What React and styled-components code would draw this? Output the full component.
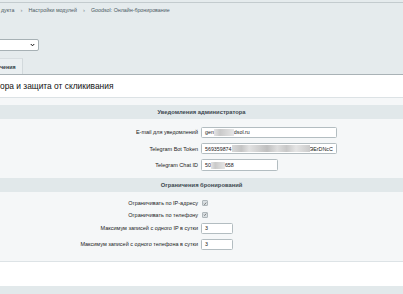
import React from "react";
import styled, { createGlobalStyle } from "styled-components";

const Global = createGlobalStyle`
  html, body { margin: 0; padding: 0; }
  body {
    width: 403px; height: 294px; overflow: hidden;
    background: #e5ebed;
    font-family: "Liberation Sans", Arial, sans-serif;
  }
`;

const Page = styled.div`
  width: 403px;
  height: 294px;
  display: flex;
  flex-direction: column;
  overflow: hidden;
`;

const Header = styled.div`
  margin-top: 2px;
  border-top: 1px solid #c3cbce;
  height: 71px;
  display: flex;
  flex-direction: column;
  background: #e5ebed;
  border-bottom: 1px solid #a9b2b6;
`;

const Crumbs = styled.div`
  display: flex;
  align-items: center;
  height: 8px;
  margin-top: 3px;
  margin-left: 1px;
  gap: 6px;
  font-size: 5.3px;
  color: #4b5a63;
  white-space: nowrap;
`;

const Sep = styled.span`
  color: #7d8a90;
  font-size: 6px;
`;

const Select = styled.div`
  margin-top: 25px;
  margin-left: -4px;
  width: 43px;
  height: 12px;
  box-sizing: border-box;
  background: #fff;
  border: 1px solid #a7b1b5;
  border-radius: 2px;
  display: flex;
  align-items: center;
  justify-content: flex-end;
  padding-right: 3px;
`;

const Tabs = styled.div`
  margin-top: 7px;
  display: flex;
  flex: 1;
`;

const Tab = styled.div`
  width: 23px;
  box-sizing: border-box;
  background: #eaeff1;
  border-right: 1px solid #d2d9dc;
  border-top: 1px solid #d8dee1;
  display: flex;
  align-items: center;
  font-size: 5.3px;
  font-weight: bold;
  color: #2d3a40;
  white-space: nowrap;
  overflow: hidden;
`;

const TitleBar = styled.div`
  height: 21px;
  background: #fff;
  border-bottom: 1px solid #dce2e5;
  display: flex;
  align-items: center;
  font-size: 8.4px;
  color: #111;
  white-space: nowrap;
  padding-bottom: 1px;
`;

const Content = styled.div`
  background: #f5f7f8;
  padding: 7px 0 9px;
  border-bottom: 1px solid #dde3e6;
`;

const SectionHead = styled.div`
  height: 14px;
  background: #e1e8ea;
  display: flex;
  align-items: center;
  justify-content: center;
  font-size: 5.8px;
  font-weight: bold;
  color: #3b474e;
  margin-top: ${(p) => p.$mt || 0}px;
  margin-bottom: ${(p) => p.$mb || 0}px;
`;

const Row = styled.div`
  display: grid;
  grid-template-columns: 201px 1fr;
  height: ${(p) => p.$h}px;
  align-items: center;
`;

const Label = styled.div`
  text-align: right;
  padding-right: 3px;
  font-size: 5.5px;
  color: #222;
  white-space: nowrap;
`;

const Cell = styled.div`
  display: flex;
  align-items: center;
`;

const Field = styled.div`
  width: ${(p) => p.$w}px;
  height: ${(p) => p.$hh || 11}px;
  box-sizing: border-box;
  background: #fff;
  border: 1px solid #b3bdc1;
  border-radius: 1.5px;
  display: flex;
  align-items: center;
  padding-left: 3px;
  font-size: 5.3px;
  color: #222;
  white-space: nowrap;
  overflow: hidden;
`;

const Blur = styled.span`
  display: inline-block;
  width: ${(p) => p.$w}px;
  height: 7px;
  background: ${(p) => p.$bg || "linear-gradient(90deg,#e4e4e4,#c9c9c9 30%,#d6d6d6 60%,#e6e6e6)"};
  filter: blur(0.6px);
`;

const Check = styled.span`
  display: inline-flex;
  width: 6px;
  height: 6px;
  margin-left: 1px;
  box-sizing: border-box;
  border: 1px solid #aeb6ba;
  background: #d9dfe2;
  border-radius: 1px;
  align-items: center;
  justify-content: center;
`;

const Footer = styled.div`
  height: 24px;
  background: #fff;
`;

const Bottom = styled.div`
  flex: 1;
  background: #e2e9eb;
`;

const Tick = () => (
  <svg width="5" height="5" viewBox="0 0 10 10">
    <path d="M2 5.5 L4.2 7.6 L8.2 2.6" fill="none" stroke="#555" strokeWidth="1.6" />
  </svg>
);

export default function App() {
  return (
    <Page>
      <Global />
      <Header>
        <Crumbs>
          <span>дукта</span>
          <Sep>›</Sep>
          <span>Настройки модулей</span>
          <Sep>›</Sep>
          <span>Goodsol: Онлайн-бронирование</span>
        </Crumbs>
        <Select>
          <svg width="5" height="4" viewBox="0 0 10 8">
            <path d="M1.5 2 L5 5.6 L8.5 2" fill="none" stroke="#111" strokeWidth="2" />
          </svg>
        </Select>
        <Tabs>
          <Tab>чения</Tab>
        </Tabs>
      </Header>
      <TitleBar>ора и защита от скликивания</TitleBar>
      <Content>
        <SectionHead $mb={5}>Уведомления администратора</SectionHead>
        <Row $h={16}>
          <Label>E-mail для уведомлений</Label>
          <Cell>
            <Field $w={136}>
              gen<Blur $w={20} />dsol.ru
            </Field>
          </Cell>
        </Row>
        <Row $h={17}>
          <Label>Telegram Bot Token</Label>
          <Cell>
            <Field $w={136}>
              569359874
              <Blur
                $w={78}
                $bg="linear-gradient(90deg,#d8d8d8,#c4c4c4 12%,#e2e2e2 22%,#cfcfcf 35%,#bfbfbf 45%,#dedede 58%,#c8c8c8 70%,#e5e5e5 82%,#cacaca)"
              />
              ЭErDNcC
            </Field>
          </Cell>
        </Row>
        <Row $h={16}>
          <Label>Telegram Chat ID</Label>
          <Cell>
            <Field $w={77} $hh={12}>
              50<Blur $w={14} />658
            </Field>
          </Cell>
        </Row>
        <SectionHead $mt={5} $mb={5}>Ограничения бронирований</SectionHead>
        <Row $h={12}>
          <Label>Ограничивать по IP-адресу</Label>
          <Cell>
            <Check><Tick /></Check>
          </Cell>
        </Row>
        <Row $h={11}>
          <Label>Ограничивать по телефону</Label>
          <Cell>
            <Check><Tick /></Check>
          </Cell>
        </Row>
        <Row $h={16}>
          <Label>Максимум записей с одного IP в сутки</Label>
          <Cell>
            <Field $w={32}>3</Field>
          </Cell>
        </Row>
        <Row $h={16}>
          <Label>Максимум записей с одного телефона в сутки</Label>
          <Cell>
            <Field $w={32}>3</Field>
          </Cell>
        </Row>
      </Content>
      <Footer />
      <Bottom />
    </Page>
  );
}
